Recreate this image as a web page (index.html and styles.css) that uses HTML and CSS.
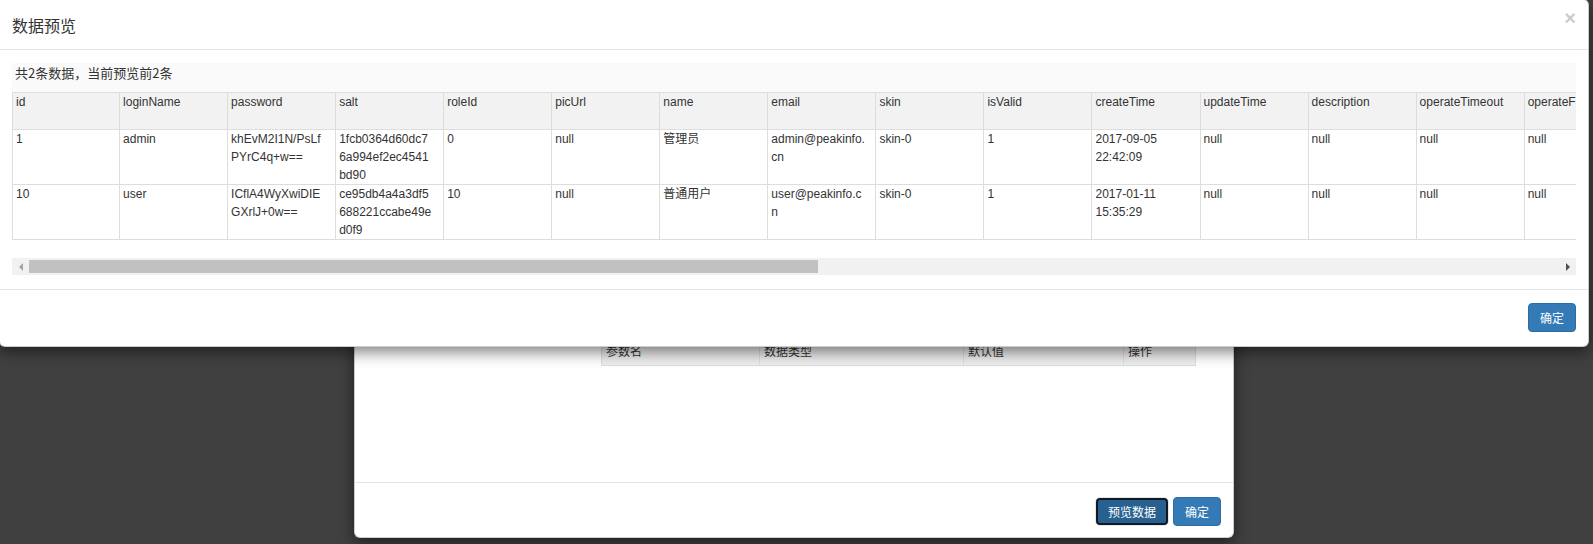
FILE: index.html
```html
<!DOCTYPE html>
<html lang="zh-CN">
<head>
<meta charset="utf-8">
<title>数据预览</title>
<link rel="stylesheet" href="styles.css">
</head>
<body>
<div class="stage">
  <div class="dialog dialog-back">
    <div class="back-body">
      <div class="back-label"></div>
      <table class="params">
        <thead>
          <tr><th class="p1">参数名</th><th class="p2">数据类型</th><th class="p3">默认值</th><th class="p4">操作</th></tr>
        </thead>
      </table>
    </div>
    <div class="back-footer">
      <button class="btn btn-focus">预览数据</button>
      <button class="btn">确定</button>
    </div>
  </div>

  <div class="dialog dialog-front">
    <div class="front-header">
      <h4 class="title">数据预览</h4>
      <span class="close">×</span>
    </div>
    <div class="front-body">
      <div class="summary">共2条数据，当前预览前2条</div>
      <div class="scroller">
        <table class="grid">
          <thead>
            <tr>
              <th>id</th><th>loginName</th><th>password</th><th>salt</th><th>roleId</th><th>picUrl</th><th>name</th><th>email</th><th>skin</th><th>isValid</th><th>createTime</th><th>updateTime</th><th>description</th><th>operateTimeout</th><th>operateFrequency</th><th>lastLoginTime</th><th>lastLoginIp</th>
            </tr>
          </thead>
          <tbody>
            <tr>
              <td>1</td><td>admin</td><td>khEvM2I1N/PsLfPYrC4q+w==</td><td>1fcb0364d60dc76a994ef2ec4541bd90</td><td>0</td><td>null</td><td>管理员</td><td>admin@peakinfo.cn</td><td>skin-0</td><td>1</td><td class="dt">2017-09-05 22:42:09</td><td>null</td><td>null</td><td>null</td><td>null</td><td>null</td><td>null</td>
            </tr>
            <tr>
              <td>10</td><td>user</td><td>ICflA4WyXwiDIEGXrlJ+0w==</td><td>ce95db4a4a3df5688221ccabe49ed0f9</td><td>10</td><td>null</td><td>普通用户</td><td>user@peakinfo.cn</td><td>skin-0</td><td>1</td><td class="dt">2017-01-11 15:35:29</td><td>null</td><td>null</td><td>null</td><td>null</td><td>null</td><td>null</td>
            </tr>
          </tbody>
        </table>
      </div>
      <div class="hscroll">
        <span class="sb-btn"><span class="tri tri-left"></span></span>
        <div class="track"><div class="thumb"></div></div>
        <span class="sb-btn"><span class="tri tri-right"></span></span>
      </div>
    </div>
    <div class="front-footer">
      <button class="btn">确定</button>
    </div>
  </div>
</div>
</body>
</html>
```

FILE: styles.css
```css
* { box-sizing: border-box; }

html, body {
  margin: 0;
  padding: 0;
}

body {
  width: 1593px;
  height: 544px;
  overflow: hidden;
  background: #404040;
  font-family: "Liberation Sans", "Noto Sans CJK SC", sans-serif;
  font-size: 12px;
  color: #333;
}

.stage {
  position: relative;
  width: 1593px;
  height: 544px;
}

.dialog {
  position: absolute;
  background: #fff;
  border: 1px solid rgba(0, 0, 0, 0.2);
  border-radius: 6px;
  box-shadow: 0 5px 15px rgba(0, 0, 0, 0.5);
  display: flex;
  flex-direction: column;
}

/* ---------- background dialog ---------- */
.dialog-back {
  left: 354px;
  top: 200px;
  width: 880px;
  height: 338px;
}

.back-body {
  flex: 1;
  display: grid;
  grid-template-columns: 246px 595px;
  align-content: start;
  padding-top: 135px;
}

.params {
  border-collapse: separate;
  border-spacing: 0;
  table-layout: fixed;
  width: 595px;
  border-left: 1px solid #ddd;
  border-top: 1px solid #ddd;
}

.params th {
  font-weight: normal;
  text-align: left;
  background: #eee;
  border-right: 1px solid #ddd;
  border-bottom: 1px solid #ddd;
  height: 29px;
  line-height: 28px;
  padding: 0 4px;
  font-size: 12px;
  font-family: "Noto Sans CJK SC", sans-serif;
  color: #333;
}

.params .p1 { width: 158px; }
.params .p2 { width: 204px; }
.params .p3 { width: 160px; }
.params .p4 { width: 72px; }

.back-footer {
  border-top: 1px solid #e5e5e5;
  padding: 14px 12px 11px;
  display: flex;
  justify-content: flex-end;
  align-items: center;
  gap: 5px;
}

/* ---------- buttons ---------- */
.btn {
  font-family: "Noto Sans CJK SC", sans-serif;
  font-size: 12px;
  line-height: 17px;
  padding: 5px 11px;
  color: #fff;
  background: #337ab7;
  border: 1px solid #2e6da4;
  border-radius: 4px;
  margin: 0;
}

.btn-focus {
  background: #286090;
  border: 2px solid #111a24;
  padding: 3px 10px;
  box-shadow: 0 0 0 1px #e6e6e6;
}

/* ---------- front dialog ---------- */
.dialog-front {
  left: -1px;
  top: -1px;
  width: 1590px;
  border-radius: 0 6px 6px 6px;
}

.front-header {
  height: 50px;
  border-bottom: 1px solid #e5e5e5;
  padding: 0 12px;
  display: flex;
  justify-content: space-between;
  align-items: center;
}

.title {
  margin: 0;
  font-size: 16px;
  font-weight: normal;
  font-family: "Noto Sans CJK SC", sans-serif;
  color: #333;
  line-height: 22px;
}

.close {
  align-self: flex-start;
  margin-top: 8px;
  font-family: "Liberation Sans", sans-serif;
  font-size: 20px;
  font-weight: bold;
  line-height: 1;
  color: #000;
  opacity: 0.2;
}

.front-body {
  padding: 13px 12px 14px;
}

.summary {
  height: 29px;
  padding-left: 3px;
  line-height: 20px;
  font-size: 13px;
  font-family: "Noto Sans CJK SC", sans-serif;
  background: #fafafa;
  color: #333;
}

.scroller {
  overflow: hidden;
  padding-bottom: 18px;
}

.grid {
  border-collapse: separate;
  border-spacing: 0;
  table-layout: fixed;
  width: 1837px;
  border-left: 1px solid #ddd;
  border-top: 1px solid #ddd;
}

.grid th,
.grid td {
  width: 108px;
  text-align: left;
  vertical-align: top;
  font-weight: normal;
  font-size: 12px;
  line-height: 18px;
  padding: 0 10px 0 3px;
  border-right: 1px solid #ddd;
  border-bottom: 1px solid #ddd;
  color: #333;
  word-break: break-all;
}

.grid th:first-child,
.grid td:first-child {
  width: 107px;
}

.grid th {
  background: #f2f2f2;
  height: 37px;
  word-break: normal;
  white-space: nowrap;
  overflow: hidden;
}

.grid td.dt {
  word-break: normal;
}

.hscroll {
  display: flex;
  height: 17px;
  background: #f1f1f1;
}

.sb-btn {
  width: 17px;
  flex: none;
  display: flex;
  align-items: center;
  justify-content: center;
}

.tri {
  width: 0;
  height: 0;
  border-top: 4px solid transparent;
  border-bottom: 4px solid transparent;
}

.tri-left {
  border-right: 4px solid #a3a3a3;
}

.tri-right {
  border-left: 4px solid #505050;
}

.track {
  flex: 1;
  padding: 2px 0;
}

.thumb {
  width: 789px;
  height: 13px;
  background: #c1c1c1;
}

.front-footer {
  border-top: 1px solid #e5e5e5;
  padding: 13px 12px 14px;
  display: flex;
  justify-content: flex-end;
}
```
